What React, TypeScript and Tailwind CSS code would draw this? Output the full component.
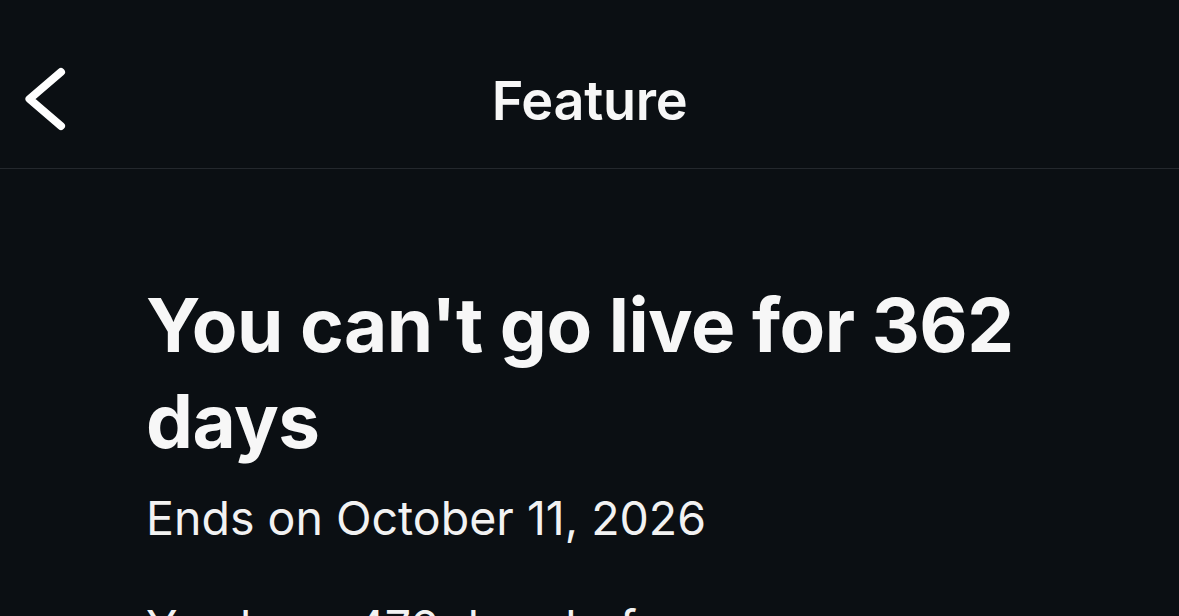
import React from 'react';

const BackIcon = () => (
  <svg width="44" height="68" viewBox="0 0 44 68" fill="none" stroke="currentColor" strokeWidth="8" strokeLinecap="round" strokeLinejoin="round">
    <path d="M38 7 L6.5 34 L38 61" />
  </svg>
);

export default function App() {
  return (
    <div className="w-[1179px] h-[616px] overflow-hidden bg-[#0b0f13] text-[#f7f7f7]" style={{ fontFamily: 'Inter, "Liberation Sans", sans-serif' }}>
      <header className="relative h-[169px] flex justify-center border-b border-[#24282d]">
        <button className="absolute left-[23px] top-[65px] text-white">
          <BackIcon />
        </button>
        <h1 className="text-[54px] font-semibold tracking-[-0.3px] leading-none mt-[74px]">Feature</h1>
      </header>

      <main className="pl-[146px] pr-[146px] pt-[108px]">
        <h2 className="text-[74.5px] font-bold leading-[96px] tracking-[-0.5px]">
          You can't go live for 362 days
        </h2>
        <p className="mt-[19px] text-[46.5px] leading-[60px] text-[#f2f2f2]">Ends on October 11, 2026</p>
        <p className="mt-[49px] text-[46.5px] leading-[60px] tracking-[-0.6px] text-[#f2f2f2]">
          You have 476 days before you can go live again.
        </p>
      </main>
    </div>
  );
}
